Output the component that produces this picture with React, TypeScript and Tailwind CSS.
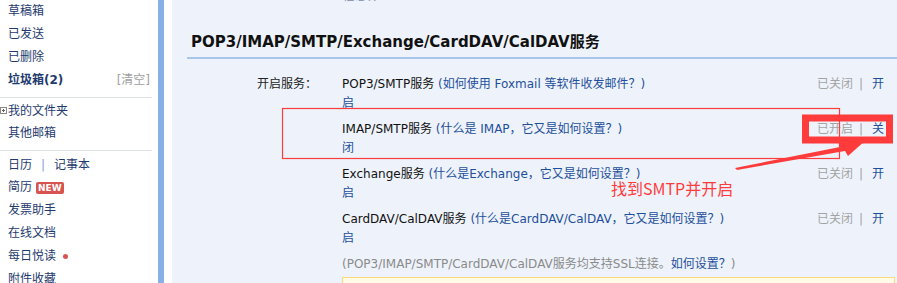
import React from 'react';

const FONT = '"DejaVu Sans", "Noto Sans CJK SC", sans-serif';

type Service = {
    name: string;
    help: string;
    status: string;
    action: string;
    wrap: string;
};

const services: Service[] = [
    { name: 'POP3/SMTP服务', help: '(如何使用 Foxmail 等软件收发邮件？)', status: '已关闭', action: '开', wrap: '启' },
    { name: 'IMAP/SMTP服务', help: '(什么是 IMAP，它又是如何设置？)', status: '已开启', action: '关', wrap: '闭' },
    { name: 'Exchange服务', help: '(什么是Exchange，它又是如何设置？)', status: '已关闭', action: '开', wrap: '启' },
    { name: 'CardDAV/CalDAV服务', help: '(什么是CardDAV/CalDAV，它又是如何设置？)', status: '已关闭', action: '开', wrap: '启' },
];

function SideItem({ children, bold }: { children: React.ReactNode; bold?: boolean }) {
    return (
        <div className={'h-[23px] leading-[23px] pl-[8px] flex items-center text-[#1e3a6e] ' + (bold ? 'font-bold' : '')}>
            {children}
        </div>
    );
}

function Sidebar() {
    return (
        <aside className="w-[158px] shrink-0 bg-white text-[12px] overflow-hidden">
            <div>
                <SideItem>草稿箱</SideItem>
                <SideItem>已发送</SideItem>
                <SideItem>已删除</SideItem>
                <div className="h-[23px] leading-[23px] pl-[8px] pr-[8px] flex items-center justify-between">
                    <span className="font-bold text-[#1e3a6e]">垃圾箱(2)</span>
                    <span className="text-[#a0a0a0]">[清空]</span>
                </div>
                <div className="h-[6px] border-b border-[#d9e0ea] w-[152px]" />
                <div className="h-[23px] mt-[1px] flex items-center text-[#1e3a6e]">
                    <svg width="7" height="7" viewBox="0 0 7 7" className="mr-[1px]">
                        <rect x="0.5" y="0.5" width="6" height="6" fill="none" stroke="#888" />
                        <path d="M2 3.5h3M3.5 2v3" stroke="#666" />
                    </svg>
                    我的文件夹
                </div>
                <SideItem>其他邮箱</SideItem>
                <div className="h-[6px] border-b border-[#d9e0ea] w-[152px]" />
                <div className="h-[23px] pl-[8px] flex items-center text-[#1e3a6e] mt-[2px]">
                    日历
                    <span className="mx-[9px] text-[#7fa4d8]">|</span>
                    记事本
                </div>
                <SideItem>
                    简历
                    <span className="ml-[4px] px-[2px] h-[12px] leading-[12px] rounded-[2px] bg-[#d9534f] text-white text-[9px] font-bold">
                        NEW
                    </span>
                </SideItem>
                <SideItem>发票助手</SideItem>
                <SideItem>在线文档</SideItem>
                <SideItem>
                    每日悦读
                    <span className="ml-[7px] w-[5px] h-[5px] rounded-full bg-[#d9534f]" />
                </SideItem>
                <SideItem>附件收藏</SideItem>
            </div>
        </aside>
    );
}

export default function App() {
    return (
        <div className="relative w-[897px] h-[283px] overflow-hidden flex" style={{ fontFamily: FONT }}>
            <Sidebar />
            <div className="w-[6px] shrink-0 bg-[#86b0e6]" />
            <div className="w-[8px] shrink-0 bg-white" />
            <main className="flex-1 bg-[#eef3fb] pl-[15px] text-[12px] overflow-hidden">
                <div className="mt-[-12px] h-[16px] leading-[16px] pl-[156px] text-[#7b8aa6]">信息。)</div>
                <h2 className="mt-[28px] pl-[4px] pb-[5px] border-b-2 border-[#a8c5eb] text-[15px] leading-[20px] font-bold text-[#111]">
                    POP3/IMAP/SMTP/Exchange/CardDAV/CalDAV服务
                </h2>
                <div className="mt-[16px] pl-[70px] flex">
                    <div className="w-[85px] shrink-0 leading-[19px] text-[#222]">开启服务：</div>
                    <div className="flex-1 pr-[13px] flex flex-col gap-[7px]">
                        {services.map((s) => (
                            <div key={s.name} className="leading-[19px]">
                                <div className="flex justify-between">
                                    <span>
                                        <span className="text-[#111]">{s.name} </span>
                                        <span className="text-[#1e4f9c]">{s.help}</span>
                                    </span>
                                    <span className="text-[#a3a3a3]">
                                        {s.status}
                                        <span className="ml-[6px] mr-[9px]">|</span>
                                        <span className="text-[#1e4f9c]">{s.action}</span>
                                    </span>
                                </div>
                                <div className="text-[#1e4f9c]">{s.wrap}</div>
                            </div>
                        ))}
                        <div className="leading-[19px] text-[#8a8a8a]">
                            (POP3/IMAP/SMTP/CardDAV/CalDAV服务均支持SSL连接。
                            <span className="text-[#1e4f9c]">如何设置？</span>)
                        </div>
                        <div className="h-[20px] mt-[-4px] mr-[-11px] border border-[#ffd977] bg-[#fffbe6]" />
                    </div>
                </div>
            </main>

            {/* annotations drawn over the screenshot */}
            <svg className="absolute left-0 top-0 pointer-events-none" width="897" height="283">
                <rect x="282.5" y="108.5" width="557" height="50" fill="none" stroke="#ff3b3b" strokeWidth="1.2" />
                <rect x="805.5" y="118" width="84" height="22" fill="none" stroke="#ff3b3b" strokeWidth="7" />
                <polygon points="735,168 840,147 838,141 866,140 848,156 845,151 737,170" fill="#ff3b3b" />
            </svg>
            <div
                className="absolute left-[611px] top-[178px] text-[16px] leading-[20px] text-[#ff3b3b]"
                style={{ fontFamily: '"Noto Sans CJK SC", sans-serif' }}
            >
                找到SMTP并开启
            </div>
        </div>
    );
}
